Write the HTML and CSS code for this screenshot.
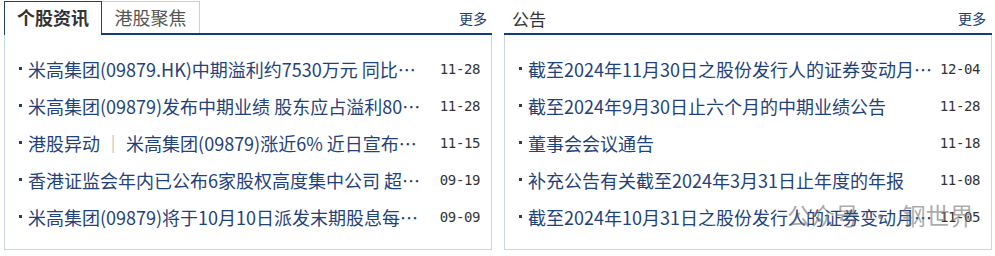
FILE: index.html
```html
<!DOCTYPE html>
<html lang="zh-CN">
<head>
<meta charset="utf-8">
<title>个股资讯</title>
<link rel="stylesheet" href="styles.css">
</head>
<body>
<div class="wrap">
  <section class="panel">
    <div class="head">
      <div class="tab active">个股资讯</div>
      <div class="tab">港股聚焦</div>
      <a class="more">更多</a>
    </div>
    <ul class="list">
      <li><i class="dot"></i><span class="t">米高集团(09879.HK)中期溢利约7530万元 同比…</span><span class="d">11-28</span></li>
      <li><i class="dot"></i><span class="t">米高集团(09879)发布中期业绩 股东应占溢利80…</span><span class="d">11-28</span></li>
      <li><i class="dot"></i><span class="t">港股异动 <span class="sep">｜</span> 米高集团(09879)涨近6% 近日宣布…</span><span class="d">11-15</span></li>
      <li><i class="dot"></i><span class="t">香港证监会年内已公布6家股权高度集中公司 超…</span><span class="d">09-19</span></li>
      <li><i class="dot"></i><span class="t">米高集团(09879)将于10月10日派发末期股息每…</span><span class="d">09-09</span></li>
    </ul>
  </section>
  <section class="panel">
    <div class="head plain">
      <div class="title">公告</div>
      <a class="more">更多</a>
    </div>
    <ul class="list">
      <li><i class="dot"></i><span class="t">截至2024年11月30日之股份发行人的证券变动月…</span><span class="d">12-04</span></li>
      <li><i class="dot"></i><span class="t">截至2024年9月30日止六个月的中期业绩公告</span><span class="d">11-28</span></li>
      <li><i class="dot"></i><span class="t">董事会会议通告</span><span class="d">11-18</span></li>
      <li><i class="dot"></i><span class="t">补充公告有关截至2024年3月31日止年度的年报</span><span class="d">11-08</span></li>
      <li><i class="dot"></i><span class="t">截至2024年10月31日之股份发行人的证券变动月…</span><span class="d">11-05</span></li>
    </ul>
  </section>
</div>
<div class="watermark">公众号 · 钢世界</div>
</body>
</html>
```
FILE: styles.css
```css
html, body {
  margin: 0;
  padding: 0;
  background: #fff;
}
body {
  font-family: "Noto Sans CJK SC", "Noto Sans", sans-serif;
  position: relative;
  width: 995px;
  height: 256px;
  overflow: hidden;
}
.wrap {
  display: flex;
  gap: 12px;
  padding: 1px 0 0 4px;
}
.panel {
  width: 488px;
  display: flex;
  flex-direction: column;
}
.head {
  height: 32px;
  border-bottom: 2px solid #103c7c;
  display: flex;
  align-items: flex-start;
}
.tab {
  box-sizing: border-box;
  width: 98px;
  height: 32px;
  border: 1px solid #c5d1de;
  border-left: none;
  border-bottom: none;
  font-size: 18px;
  line-height: 31px;
  text-align: center;
  color: #555;
  background: #fff;
}
.tab.active {
  height: 34px;
  margin-bottom: -2px;
  border: 1px solid #24406c;
  border-bottom: none;
  color: #333;
  font-weight: bold;
  line-height: 31px;
}
.title {
  font-size: 17px;
  color: #333;
  padding-left: 8px;
  line-height: 36px;
}
.more {
  margin-left: auto;
  font-size: 14px;
  color: #1b3d72;
  line-height: 34px;
  padding-right: 5px;
}
.head.plain .more {
  padding-right: 6px;
}
.list {
  list-style: none;
  margin: 0;
  padding: 15px 11px 0 14px;
  height: 199px;
  border: 1px solid #c9d6e4;
  border-top: none;
}
.list li {
  height: 37px;
  display: flex;
  align-items: center;
}
.dot {
  width: 3px;
  height: 3px;
  background: #2d3c55;
  margin-right: 6px;
  flex: none;
}
.t {
  font-size: 18px;
  color: #1f427c;
  white-space: nowrap;
}
.sep {
  color: #a0a8b4;
}
.d {
  margin-left: auto;
  padding-left: 8px;
  font-family: "DejaVu Sans Mono", "Liberation Mono", monospace;
  font-size: 14px;
  letter-spacing: -0.4px;
  color: #333;
  flex: none;
}
.watermark {
  position: absolute;
  left: 787px;
  top: 201px;
  font-size: 24px;
  line-height: 28px;
  color: rgba(115, 115, 115, 0.6);
  word-spacing: 4px;
  white-space: nowrap;
}
```
